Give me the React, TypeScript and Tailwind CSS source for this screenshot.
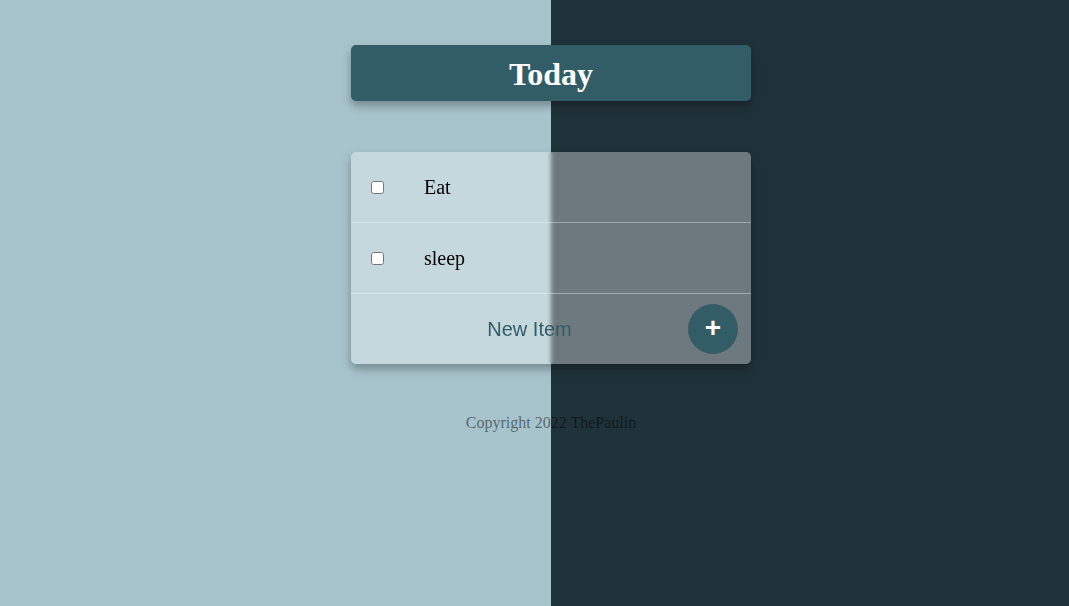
export default function App() {
  const items = ["Eat", "sleep"];

  return (
    <div className="min-h-[606px] w-full bg-[linear-gradient(to_right,#a7c4cc_551px,#203239_551px)]">
      <div className="flex flex-col items-center pl-[33px] pt-[45px]">
        <div className="flex h-[56px] w-[400px] items-center justify-center rounded-[5px] bg-[#325d67] pt-[2px] shadow-[0_5px_10px_rgba(0,0,0,0.3)]">
          <h1 className="font-['Liberation_Serif',serif] text-[32px] font-bold text-white">
            Today
          </h1>
        </div>

        <div className="mt-[51px] w-[400px] overflow-hidden rounded-[5px] bg-white/35 shadow-[0_5px_10px_rgba(0,0,0,0.3)] backdrop-blur-[2px]">
          {items.map((item) => (
            <div
              key={item}
              className="flex h-[71px] items-center border-b border-white/35 pl-5"
            >
              <input type="checkbox" className="size-[13px]" />
              <p className="ml-10 font-['Liberation_Serif',serif] text-[20px] text-black">
                {item}
              </p>
            </div>
          ))}
          <form className="flex h-[70px] items-center pr-[13px]">
            <input
              type="text"
              placeholder="New Item"
              className="h-[60px] grow bg-transparent pl-[20px] text-center font-['Liberation_Sans',sans-serif] text-[20px] text-[#325d67] outline-none placeholder:text-[#325d67]"
            />
            <button
              type="button"
              className="flex size-[50px] shrink-0 items-center justify-center rounded-full bg-[#325d67] pb-[3px] font-['Liberation_Sans',sans-serif] text-[28px] font-bold text-white"
            >
              +
            </button>
          </form>
        </div>

        <footer className="mt-[47px] font-['Liberation_Serif',serif] text-[16px] text-black/50">
          <p>Copyright 2022 ThePaulin</p>
        </footer>
      </div>
    </div>
  );
}
